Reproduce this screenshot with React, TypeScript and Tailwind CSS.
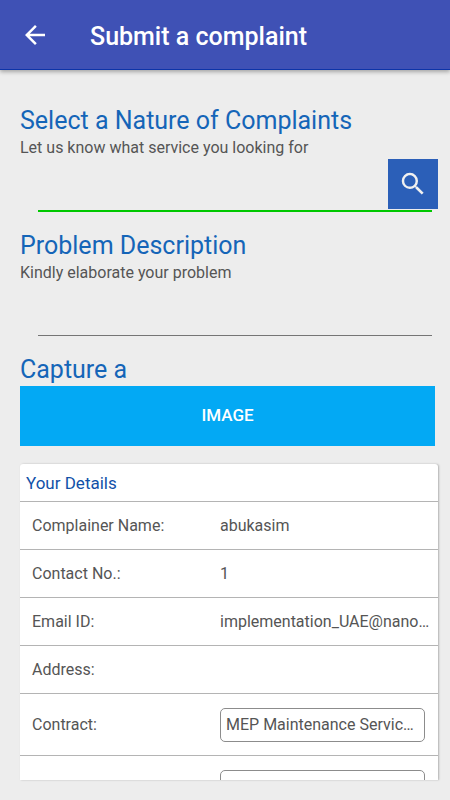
import React from 'react';
import { MdArrowBack, MdSearch } from 'react-icons/md';

const details = [
    { label: 'Complainer Name:', value: 'abukasim' },
    { label: 'Contact No.:', value: '1' },
    { label: 'Email ID:', value: 'implementation_UAE@nano…' },
    { label: 'Address:', value: '' },
];

const selectStyle =
    'block w-full h-[34px] appearance-none truncate rounded-[5px] border border-[#8c8c8c] bg-white px-[5px] text-[16px] text-[#555555]';

const App: React.FC = () => {
    return (
        <div className="flex h-screen flex-col bg-[#ededed] font-['Roboto',sans-serif] text-[#555555]">
            <header className="z-10 flex h-[70px] shrink-0 items-center gap-10 border-b border-[#0d34a8] bg-[#3f51b5] pl-5 text-white shadow-[0_2px_4px_rgba(0,0,0,0.3)]">
                <button type="button" aria-label="Back">
                    <MdArrowBack size={30} />
                </button>
                <h1 className="pt-1 text-[25px] font-medium leading-8">Submit a complaint</h1>
            </header>

            <main className="flex min-h-0 flex-1 flex-col gap-[18px] overflow-hidden pt-[35px] pr-3 pb-5 pl-5">
                <section>
                    <h2 className="text-[25px] leading-8 text-[#1565b8]">Select a Nature of Complaints</h2>
                    <label htmlFor="nature" className="block text-[16px] leading-[22px]">
                        Let us know what service you looking for
                    </label>
                    <div className="relative pr-[6px] pl-[18px]">
                        <input id="nature" className="block h-[53px] w-full border-b-2 border-[#00c800] pr-12 text-[16px] outline-none" />
                        <button
                            type="button"
                            aria-label="Search"
                            className="absolute top-0 right-0 flex h-[50px] w-[50px] items-center justify-center bg-[#2b5fb8] text-[#f0f0f0]"
                        >
                            <MdSearch size={30} />
                        </button>
                    </div>
                </section>

                <section>
                    <h2 className="text-[25px] leading-8 text-[#1565b8]">Problem Description</h2>
                    <label htmlFor="problem" className="block text-[16px] leading-[22px]">
                        Kindly elaborate your problem
                    </label>
                    <div className="pr-[6px] pl-[18px]">
                        <input id="problem" className="block h-[52px] w-full border-b border-[#757575] text-[16px] outline-none" />
                    </div>
                </section>

                <section className="pr-[3px]">
                    <h2 className="text-[25px] leading-8 text-[#1565b8]">Capture a</h2>
                    <button type="button" className="block h-[60px] w-full bg-[#03a9f4] text-[17px] font-medium text-white">
                        IMAGE
                    </button>
                </section>

                <section className="min-h-0 flex-1 overflow-hidden rounded-t-[3px] bg-white shadow-[1px_0_2px_rgba(0,0,0,0.25)]">
                    <h3 className="h-[38px] border-b border-[#b4b4b4] pl-[6px] text-[17px] leading-[38px] text-[#1151a8]">
                        Your Details
                    </h3>
                    <dl className="text-[16px] leading-6">
                        {details.map((item) => (
                            <div key={item.label} className="grid h-12 grid-cols-[200px_1fr] items-center border-b border-[#b4b4b4]">
                                <dt className="pl-3">{item.label}</dt>
                                <dd className="truncate pr-1">{item.value}</dd>
                            </div>
                        ))}
                        <div className="grid h-[62px] grid-cols-[200px_1fr] items-center border-b border-[#b4b4b4]">
                            <dt className="pl-3">
                                <label htmlFor="contract">Contract:</label>
                            </dt>
                            <dd className="pr-[13px]">
                                <select id="contract" className={selectStyle}>
                                    <option>MEP Maintenance Servic…</option>
                                </select>
                            </dd>
                        </div>
                        <div className="grid h-[62px] grid-cols-[200px_1fr] items-center border-b border-[#b4b4b4]">
                            <dt className="pl-3" />
                            <dd className="pr-[13px]">
                                <select aria-label="Location" className={selectStyle} />
                            </dd>
                        </div>
                    </dl>
                </section>
            </main>
        </div>
    );
};

export default App;
